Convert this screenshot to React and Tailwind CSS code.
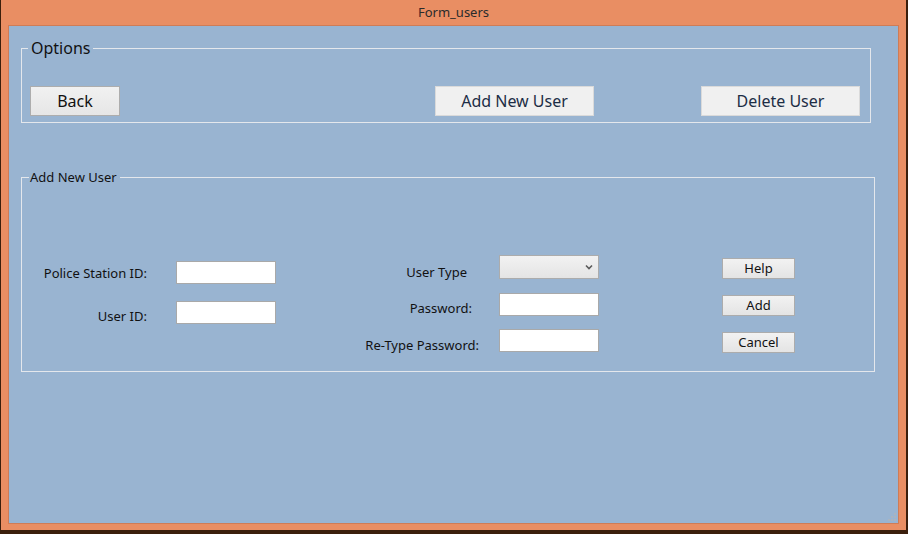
import React from "react";

function TextBox({ className = "" }) {
  return <div className={"w-[100px] h-[23px] bg-white border border-[#a9a9a9] " + className} />;
}

function SmallButton({ children, className = "" }) {
  return (
    <button className={"w-[73px] h-[21px] border border-[#acacac] bg-gradient-to-b from-[#f2f2f2] to-[#e4e4e4] text-[13px] leading-[19px] text-[#111] flex items-center justify-center " + className}>
      {children}
    </button>
  );
}

export default function App() {
  return (
    <div className="w-[908px] h-[534px] bg-[#3b1f0c] pl-[1px] pr-[2px] pb-[4px] flex font-['Noto_Sans',sans-serif] overflow-hidden">
      <div className="flex-1 flex flex-col bg-[#E98E63]">
        <div className="h-[25px] flex items-center justify-center text-[13px] text-[#2b2b2b]">Form_users</div>
        <div className="relative flex-1 mx-[7px] mb-[6px] border border-[#cf7c56] bg-[#99B4D1] text-[#111]">
          <fieldset className="ml-[12px] mt-[11px] w-[850px] border border-[#e4e7ec] pb-[6px] min-w-0">
            <legend className="ml-[6px] px-[3px] text-[16px] leading-[22px] text-[#111]">Options</legend>
            <div className="mt-[27px] flex items-center pl-[8px]">
              <button className="w-[90px] h-[30px] border border-[#adadad] bg-gradient-to-b from-[#f1f1f1] to-[#e6e6e6] text-[16px] text-[#111] flex items-center justify-center">Back</button>
              <button className="ml-[315px] w-[159px] h-[30px] border border-[#dadada] bg-[#f0f0f0] text-[16px] text-[#1c2d45] flex items-center justify-center">Add New User</button>
              <button className="ml-[107px] w-[159px] h-[30px] border border-[#dadada] bg-[#f0f0f0] text-[16px] text-[#1c2d45] flex items-center justify-center">Delete User</button>
            </div>
          </fieldset>

          <fieldset className="ml-[12px] mt-[45px] w-[854px] border border-[#e4e7ec] pb-[18px] min-w-0">
            <legend className="ml-[7px] pl-[1px] pr-[3px] text-[13px] leading-[18px] text-[#111]">Add New User</legend>
            <div className="flex items-start text-[13px] leading-[18px]">
              <div className="mt-[75px] flex flex-col gap-[17px]">
                <div className="flex items-center h-[23px]">
                  <span className="w-[125px] text-right">Police Station ID:</span>
                  <TextBox className="ml-[29px]" />
                </div>
                <div className="flex items-center h-[23px]">
                  <span className="w-[125px] text-right pt-[6px]">User ID:</span>
                  <TextBox className="ml-[29px]" />
                </div>
              </div>

              <div className="ml-[70px] mt-[69px] flex flex-col">
                <div className="flex items-center h-[24px]">
                  <span className="w-[133px] text-right pr-[12px] pt-[10px]">User Type</span>
                  <div className="ml-[20px] w-[100px] h-[24px] border border-[#acacac] bg-gradient-to-b from-[#f2f2f2] to-[#e4e4e4] flex items-center justify-end pr-[5px]">
                    <svg width="8" height="6" viewBox="0 0 8 6">
                      <path d="M1 1.5 L4 4.5 L7 1.5" fill="none" stroke="#5a5a5a" strokeWidth="1.6" />
                    </svg>
                  </div>
                </div>
                <div className="flex items-center h-[23px] mt-[14px]">
                  <span className="w-[133px] text-right pr-[7px] pt-[7px]">Password:</span>
                  <TextBox className="ml-[20px]" />
                </div>
                <div className="flex items-center h-[23px] mt-[13px]">
                  <span className="w-[133px] text-right pt-[8px]">Re-Type Password:</span>
                  <TextBox className="ml-[20px]" />
                </div>
              </div>

              <div className="ml-[123px] mt-[72px] flex flex-col gap-[16px]">
                <SmallButton>Help</SmallButton>
                <SmallButton>Add</SmallButton>
                <SmallButton>Cancel</SmallButton>
              </div>
            </div>
          </fieldset>

          <svg className="absolute right-[1px] bottom-[1px]" width="9" height="9" viewBox="0 0 9 9">
            <rect x="6" y="0" width="2" height="2" fill="#aab4bf" />
            <rect x="3" y="3" width="2" height="2" fill="#aab4bf" />
            <rect x="6" y="3" width="2" height="2" fill="#aab4bf" />
            <rect x="0" y="6" width="2" height="2" fill="#aab4bf" />
            <rect x="3" y="6" width="2" height="2" fill="#aab4bf" />
            <rect x="6" y="6" width="2" height="2" fill="#aab4bf" />
          </svg>
        </div>
      </div>
    </div>
  );
}
